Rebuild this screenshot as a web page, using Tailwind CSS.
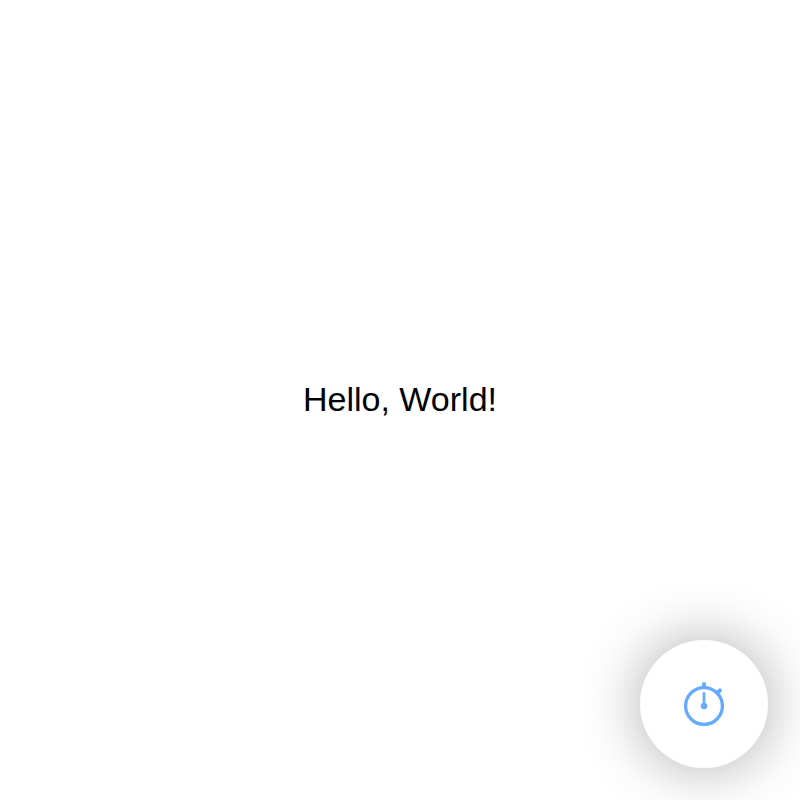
<!DOCTYPE html>
<html lang="en"><head><meta charset="utf-8"><title>Hello</title>
<script src="https://cdn.jsdelivr.net/npm/@tailwindcss/browser@4"></script></head>
<body class="bg-white">
<main class="relative flex h-screen w-screen items-center justify-center overflow-hidden bg-white">
<h1 class="pb-0.5 font-['Liberation_Sans',Arial,sans-serif] text-[34px] leading-none text-black">Hello, World!</h1>
<button aria-label="Timer" class="absolute right-8 bottom-8 flex size-32 items-center justify-center rounded-full bg-white shadow-[0_0_60px_rgba(0,0,0,0.33)]">
<svg class="size-14" viewBox="0 0 56 56" fill="none" stroke="#66aaff" stroke-width="3.3" stroke-linecap="round">
<circle cx="28" cy="30" r="18.4"/>
<path d="M28 8v3" stroke-width="4"/><path d="M28 17.4V30" stroke-width="2.7"/><path d="M41.5 16.5l2.4-2" stroke-width="4.2"/>
<circle cx="28" cy="30" r="2.2" fill="#66aaff" stroke-width="2"/>
</svg></button>
</main></body></html>
